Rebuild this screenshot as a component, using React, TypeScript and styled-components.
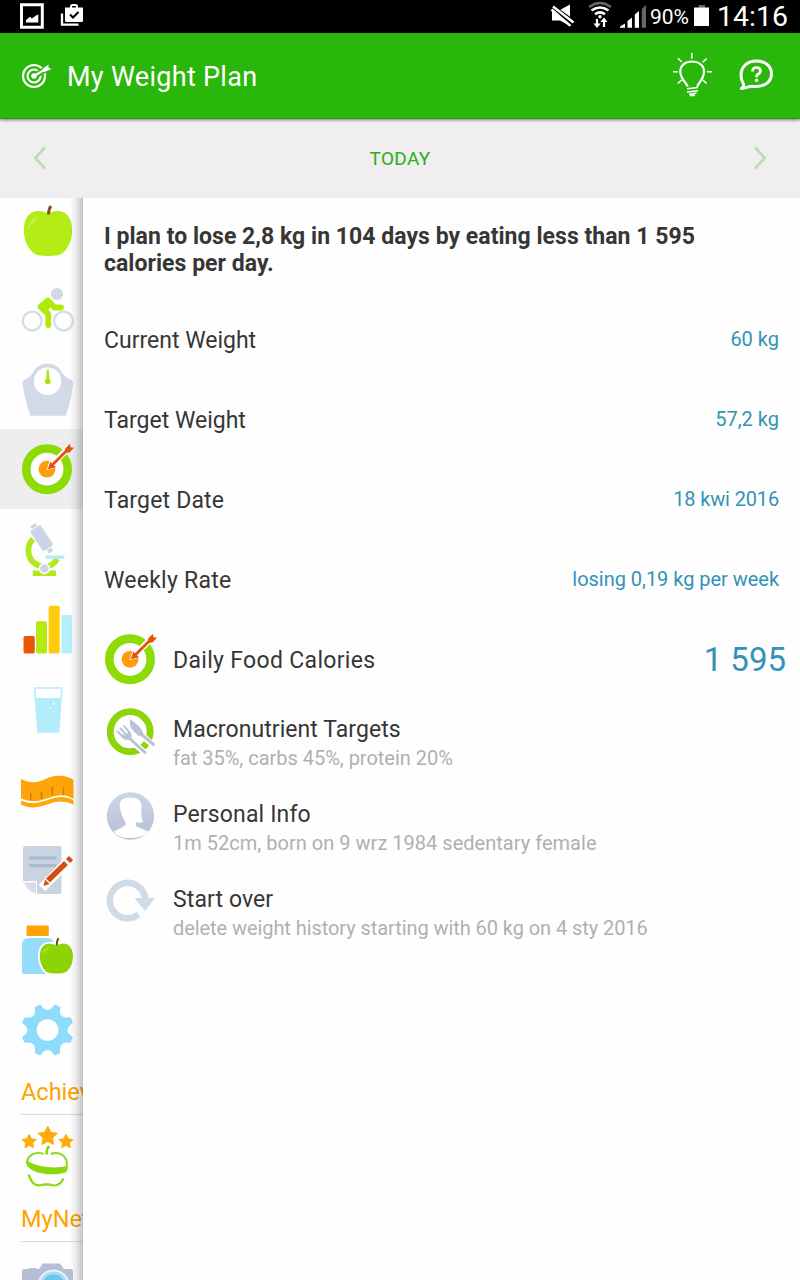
import React from 'react';
import styled, { createGlobalStyle } from 'styled-components';

const GlobalStyle = createGlobalStyle`
  * { box-sizing: border-box; }
  body {
    margin: 0;
    background: #fff;
    font-family: Roboto, "Liberation Sans", sans-serif;
    color: #363636;
  }
`;

const Screen = styled.div`
  width: 800px;
  height: 1280px;
  display: flex;
  flex-direction: column;
  overflow: hidden;
  background: #fefefe;
`;

const StatusBar = styled.div`
  height: 33px;
  flex: none;
  display: flex;
  justify-content: space-between;
  background: #000;
  color: #fff;
`;

const StatusGroup = styled.div`
  display: flex;
  align-items: center;
  height: 33px;
`;

const Battery = styled.span`
  width: 43px;
  font-size: 21px;
  line-height: 33px;
  padding-top: 1px;
  white-space: nowrap;
`;

const Clock = styled.span`
  width: 83px;
  font-size: 28.5px;
  line-height: 31px;
  white-space: nowrap;
`;

const AppBar = styled.header`
  height: 86px;
  flex: none;
  display: flex;
  align-items: center;
  background: #2ab70b;
  border-bottom: 1px solid #2a9a14;
  box-shadow: 0 1px 3px rgba(70, 50, 90, 0.65);
  position: relative;
`;

const Title = styled.h1`
  margin: 0;
  flex: 1;
  padding-top: 3px;
  font-size: 27px;
  font-weight: 400;
  letter-spacing: 0.3px;
  color: #fff;
`;

const DateBar = styled.div`
  height: 79px;
  flex: none;
  display: flex;
  align-items: center;
  justify-content: space-between;
  background: #f0eeee;
  color: #2cae16;
  font-size: 19px;
  letter-spacing: 0.3px;
`;

const Body = styled.div`
  flex: 1;
  min-height: 0;
  display: flex;
`;

const Sidebar = styled.nav`
  width: 83px;
  flex: none;
  overflow: hidden;
  position: relative;
  &::after {
    content: '';
    position: absolute;
    inset: 0 0 0 auto;
    width: 13px;
    background: linear-gradient(to right, rgba(0, 0, 0, 0), rgba(0, 0, 0, 0.07) 45%, rgba(0, 0, 0, 0.24));
  }
`;

const SideList = styled.div`
  margin-top: -9px;
`;

const SideItem = styled.div<{ $active?: boolean; $height?: number }>`
  height: ${(p) => p.$height ?? 80}px;
  background: ${(p) => (p.$active ? '#eeeeee' : 'transparent')};
  svg { display: block; }
`;

const SideHeading = styled.div<{ $height: number }>`
  height: ${(p) => p.$height}px;
  margin-left: 21px;
  border-bottom: 1px solid #dcdcdc;
  color: #ffa200;
  font-size: 23.5px;
  line-height: 47px;
  white-space: nowrap;
`;

const Content = styled.main`
  flex: 1;
  min-width: 0;
  padding: 25px 0 0 21px;
`;

const Summary = styled.p`
  margin: 0;
  height: 78px;
  font-size: 23px;
  font-weight: 700;
  line-height: 27px;
  letter-spacing: 0.035px;
  white-space: nowrap;
`;

const ValueRow = styled.div`
  height: 80px;
  padding-right: 21px;
  display: flex;
  align-items: center;
  justify-content: space-between;
`;

const Label = styled.span<{ $track?: number }>`
  font-size: 23px;
  line-height: 28px;
  letter-spacing: ${(p) => p.$track ?? 0}px;
`;

const Value = styled.span<{ $track?: number }>`
  font-size: 20px;
  line-height: 26px;
  margin-top: -5px;
  letter-spacing: ${(p) => p.$track ?? 0}px;
  color: #3492b8;
`;

const ActionRow = styled.div<{ $height: number; $right?: number }>`
  height: ${(p) => p.$height}px;
  padding-right: ${(p) => p.$right ?? 0}px;
  display: flex;
  align-items: center;
`;

const IconSlot = styled.div`
  width: 69px;
  flex: none;
  svg { display: block; }
`;

const ActionText = styled.div<{ $raise?: number }>`
  flex: 1;
  display: flex;
  flex-direction: column;
  padding-bottom: ${(p) => p.$raise ?? 0}px;
`;

const Hint = styled.span<{ $track?: number }>`
  font-size: 20px;
  line-height: 29px;
  letter-spacing: ${(p) => p.$track ?? 0}px;
  color: #b0b0b0;
`;

const BigValue = styled.span`
  margin-top: -3px;
  font-size: 33px;
  line-height: 40px;
  color: #3492b8;
`;

/* Sidebar drawings share one scroll-space coordinate system; `top` is the slot's offset. */
const SideIcon = ({ top, height = 80, children }: { top: number; height?: number; children: React.ReactNode }) => (
  <svg width="83" height={height} viewBox={`0 ${top} 83 ${height}`} fill="none">{children}</svg>
);

const TargetArt = ({ hole }: { hole: string }) => (
  <>
    <circle cx="25" cy="25.5" r="20.7" stroke="#8ddb05" strokeWidth="8.6" />
    <circle cx="25" cy="25.5" r="8.4" fill="#ff9c0c" />
    <path d="M28 23L47 4" stroke={hole} strokeWidth="6" />
    <path d="M28 16.500L24.500 26.500L35 23.500Z" fill={hole} />
    <path d="M29 22.500L46 5.500" stroke="#e4520c" strokeWidth="2.8" />
    <path d="M25.800 25.500L28.300 18L34 23.500Z" fill="#e4520c" />
    <path d="M43.200 4.800L48 0L48.500 3.500L52 4L47.500 8.800L43 9.200Z" fill="#e4520c" />
  </>
);

const applePath =
  'M48 213.500C52 210.500 60 210 65 213C71 217 72.500 225 72 233C71.500 243 65 255.500 56 255.500C51 256 45 256 40 255.500C31 255 24.500 243 24 233C23.500 225 25 217 31 213C36 210 44 210.500 48 213.500Z';

const starPath = (x: number, y: number, r: number) =>
  'M' +
  Array.from({ length: 10 }, (_, i) => {
    const a = (Math.PI / 5) * i - Math.PI / 2;
    const q = i % 2 ? r * 0.5 : r;
    return `${(x + q * Math.cos(a)).toFixed(2)} ${(y + q * Math.sin(a)).toFixed(2)}`;
  }).join('L') +
  'Z';

const Star = ({ x, y, r }: { x: number; y: number; r: number }) => (
  <path d={starPath(x, y, r)} fill="#ffab0f" stroke="#ffab0f" strokeWidth="1.2" strokeLinejoin="round" />
);

const polar = (cx: number, cy: number, r: number, deg: number) => {
  const a = (deg * Math.PI) / 180;
  return `${(cx + r * Math.cos(a)).toFixed(2)} ${(cy + r * Math.sin(a)).toFixed(2)}`;
};

/* Eight flat-topped teeth with a scooped gap between each pair. */
const gearPath = (cx: number, cy: number) =>
  Array.from({ length: 8 }, (_, i) => {
    const mid = i * 45;
    return `${i ? 'L' : 'M'}${polar(cx, cy, 25.6, mid - 17)}Q${polar(cx, cy, 14, mid)} ${polar(cx, cy, 25.6, mid + 17)}`;
  }).join('') + 'Z';

const StatusLeft = () => (
  <svg width="90" height="33" viewBox="0 0 90 33" fill="none">
    <path d="M21.500 4.700H42.300V27.300H21.500Z" stroke="#fff" strokeWidth="3" />
    <path d="M26 22.500V20L30 16.800L32 18.400L36 15.500L38.300 14.500V22.500Z" fill="#fff" />
    <path d="M62 13.500V24.700H78.500" stroke="#fff" strokeWidth="2.300" />
    <path d="M65 7.500H83V20.500Q83 22 81.500 22H66.500Q65 22 65 20.500Z" fill="#fff" />
    <path d="M71 8V6.500Q71 5 72.500 5H75.500Q77 5 77 6.500V8" stroke="#fff" strokeWidth="2" />
    <path d="M70 14.500L73 17.500L78.500 12" stroke="#000" strokeWidth="2" />
  </svg>
);

const StatusRight = () => (
  <svg width="101" height="33" viewBox="550 0 101 33" fill="none">
    <path d="M553 11H559L571 4.500V26L561 20.500H553Z" fill="#fff" />
    <path d="M552 6.300L575 23.300" stroke="#000" strokeWidth="6" />
    <path d="M552.500 9.500L571.500 25.800M554 6.500L574.500 22.500" stroke="#fff" strokeWidth="2.400" />
    <path d="M590 7Q601 -1 612 7" stroke="#666" strokeWidth="2.500" />
    <path d="M592.500 10.500Q601 4.500 609.500 10.500M596 14.300Q601 10.500 606 14.300" stroke="#fff" strokeWidth="2.600" />
    <circle cx="601" cy="16.800" r="1.700" fill="#fff" />
    <path d="M598 19V25M605 27V20.500" stroke="#fff" strokeWidth="2.200" />
    <path d="M594.500 23.500H601.800L598 28ZM601.300 22H608.500L605 17.500Z" fill="#fff" />
    <path d="M621 27.700V26.500L626 23.500V27.700ZM628.500 27.700V21L633 17.500V27.700ZM635.800 27.700V14.500L640 11V27.700Z" fill="#fff" />
    <path d="M642.800 27.700V9L647 5V27.700Z" fill="#666" />
  </svg>
);

const BatteryIcon = () => (
  <svg width="24" height="33" viewBox="693 0 24 33">
    <path d="M698.500 5H705V8H698.500Z" fill="#666" />
    <path d="M694 7.500H709V26H694Z" fill="#fff" />
  </svg>
);

const AppIcon = () => (
  <svg width="67" height="85" viewBox="0 33 67 85" fill="none">
    <circle cx="34" cy="76" r="11" stroke="#fff" strokeWidth="2.2" />
    <circle cx="34" cy="76" r="6.500" stroke="#fff" strokeWidth="2.2" />
    <circle cx="34" cy="76" r="2.800" fill="#fff" />
    <path d="M37 74.500L51 66" stroke="#2ab70b" strokeWidth="6" />
    <path d="M34 76L45 69.500" stroke="#fff" strokeWidth="2.400" />
    <path d="M42.500 69L48.500 64.500L48.500 67.500L51.500 69L44.500 72Z" fill="#fff" />
  </svg>
);

const AppActions = () => (
  <svg width="140" height="85" viewBox="660 33 140 85" fill="none" stroke="#fff">
    <path d="M687.500 86.800C687.500 83 680.300 80 680.300 71.500C680.300 65 685.500 61.500 692 61.500C698.500 61.500 704 65 704 71.500C704 80 697.500 83 697.300 86.800" strokeWidth="2.2" />
    <path d="M687 88.800L698 87.500M687 92L698 90.700M689 94.300L696.500 93.300M690 95.500H695" strokeWidth="1.500" />
    <path d="M691.800 53V58.500M678 58.300L681.700 62M706.500 58.500L702.800 62.300M673 71.700H678M707 71.700H712M677.800 83.500L681.500 80M706.500 83.500L703 80" strokeWidth="1.600" />
    <path d="M741.500 88.500C744.500 86 744 84.500 742.800 82.500C741.500 80.500 741 78 741 75C741 66.500 747.500 61 756.500 61C765.500 61 771.500 66.500 771.500 74C771.500 81.500 765 86.500 756 86.500C752.500 86.500 751 86 748.500 86.800Q745.500 88 741.500 88.500Z" strokeWidth="3" strokeLinejoin="round" />
    <path d="M752.500 71.500Q752.500 67.500 756.500 67.500T760.500 71Q760.500 73 758.500 74T756.600 77.300" strokeWidth="2.700" />
    <circle cx="756.600" cy="80.200" r="1.700" fill="#fff" stroke="none" />
  </svg>
);

const Chevron = ({ d }: { d: string }) => (
  <svg width="80" height="79" viewBox="0 0 80 79" fill="none">
    <path d={d} stroke="#b9dfb2" strokeWidth="2.800" />
  </svg>
);

const SideIcons = {
  apple: (
    <SideIcon top={189}>
      <path d={applePath} fill="#b5eb16" />
      <path d="M27.500 229Q29 219 38.500 216.500Q35 223 27.500 229Z" fill="#c3f047" />
      <path d="M48.500 214.500Q48.500 209 51 206" stroke="#8a5018" strokeWidth="2.800" />
    </SideIcon>
  ),
  bike: (
    <SideIcon top={269}>
      <circle cx="32.200" cy="321" r="9.400" stroke="#d5dce9" strokeWidth="2.300" />
      <circle cx="63.500" cy="321" r="9.400" stroke="#d5dce9" strokeWidth="2.300" />
      <circle cx="57" cy="294" r="6" fill="#d0d9e8" />
      <path d="M48.300 325V314L40.500 306.800L48 300.500L54.500 307.500H61" stroke="#b0ea08" strokeWidth="5.800" strokeLinecap="round" strokeLinejoin="round" />
      <path d="M41 306L48 300L51 306L47 312Z" fill="#b0ea08" />
    </SideIcon>
  ),
  scale: (
    <SideIcon top={349}>
      <path d="M30.500 415.800C28.500 410 25 399 22.500 384Q22 380.500 25 379.500C29 377.500 31.500 375.500 33 372.500C39 360.500 56 360.500 62 372.500C63.500 375.500 66 377.500 70.500 379.500Q73.500 380.500 73 384C71.500 399 68 410 65.500 415.800Z" fill="#d1dae6" />
      <circle cx="47.500" cy="381.300" r="13.700" fill="#fff" />
      <circle cx="47.800" cy="381.500" r="2.800" fill="#a6e20d" />
      <path d="M46.500 381L47.200 370H48.400L49.200 381Z" fill="#a6e20d" stroke="#a6e20d" strokeWidth=".7" />
    </SideIcon>
  ),
  target: (
    <SideIcon top={429}>
      <circle cx="47" cy="469" r="18" fill="#fff" />
      <g transform="translate(22 443.700)"><TargetArt hole="#fff" /></g>
    </SideIcon>
  ),
  microscope: (
    <SideIcon top={509}>
      <path d="M33 539C25 547 27 564 42.500 566.500C50 567 54.500 564 57 559" stroke="#b0ea1a" strokeWidth="5.800" />
      <path d="M32.800 570.500H56V576H32.800Z" fill="#b0ea1a" />
      <path d="M45.500 555.500H64.500V558.800H45.500Z" fill="#b3ebf7" />
      <g transform="translate(42 538.500) rotate(-34)" fill="#cbd3e4" stroke="#fff" strokeWidth="1">
        <rect x="-3.500" y="-17" width="7" height="6" rx="1" />
        <rect x="-3" y="9" width="6" height="8" rx="1" />
        <rect x="-6.700" y="-13" width="13.400" height="25" rx="2" />
      </g>
      <circle cx="44.500" cy="568.500" r="5" fill="#cbd3e4" stroke="#fff" strokeWidth="1.500" />
    </SideIcon>
  ),
  bars: (
    <SideIcon top={589}>
      <rect x="23.500" y="636" width="11.300" height="17.500" rx="1.800" fill="#ea5707" />
      <rect x="36" y="621.300" width="11" height="32.200" rx="1.800" fill="#b6eb12" />
      <rect x="48.700" y="605.700" width="11" height="47.800" rx="1.800" fill="#ffcb0a" />
      <rect x="61.300" y="615" width="10.700" height="38.500" rx="1.800" fill="#b5effb" />
    </SideIcon>
  ),
  glass: (
    <SideIcon top={669}>
      <path d="M34.500 688H61.800L58.500 732H38Z" stroke="#b4edfa" strokeWidth="1.600" strokeLinejoin="round" />
      <path d="M35.500 698H61L58.500 732H38Z" fill="#b4edfa" />
      <g fill="#dff8fd"><circle cx="53.500" cy="703.500" r="1.500" /><circle cx="50.500" cy="707.500" r="1" /><circle cx="54.500" cy="711.500" r="1" /></g>
    </SideIcon>
  ),
  tape: (
    <SideIcon top={749}>
      <path d="M21 779C39 788 45 775.500 59 775.800Q69 776 73.500 780V799Q66 793.500 55 796C44 799 36 804.500 21 798.500Z" fill="#ffa409" />
      <path d="M21 800.500C35 807 45 800 55 797.800Q66 795.500 73.500 800.800V804.500Q65 800 55 802C44 805 34 811 21 804.500Z" fill="#ffa409" />
      <path d="M30.800 793V800M41.500 792V799M52.300 787V795M63.500 787V795" stroke="#c57c17" strokeWidth="1.500" />
    </SideIcon>
  ),
  note: (
    <SideIcon top={829}>
      <path d="M25 846H59.500Q61.500 846 61.500 848V891.500Q61.500 894 59.500 894H37V881H23V848Q23 846 25 846Z" fill="#c9d3e2" />
      <path d="M24 882.500H36V893.500Q28 892 24 882.500Z" fill="#d5dde9" />
      <path d="M29 858H56.500M29 865.700H56.500" stroke="#a9bdcd" strokeWidth="3.300" />
      <path d="M42 888L72 857" stroke="#fff" strokeWidth="9" />
      <path d="M48 880.500L66 863" stroke="#d44e12" strokeWidth="5.500" />
      <path d="M68 861L71 858" stroke="#d44e12" strokeWidth="5.800" />
      <path d="M43.500 886L45 879.500L49.500 884Z" fill="#d44e12" />
    </SideIcon>
  ),
  bottle: (
    <SideIcon top={909}>
      <rect x="26.500" y="925.500" width="22.300" height="10.500" rx="1.500" fill="#ffa404" />
      <path d="M22 972V945Q22 938 29 938H47Q54 938 54 945V974H24Q22 974 22 972Z" fill="#95dcfa" />
      <g transform="translate(21.500 794) scale(.726 .705)">
        <path d={applePath} fill="#8dd406" stroke="#fff" strokeWidth="2.500" />
        <path d="M28 228Q30 218 39 216.500Q35 223 28 228Z" fill="#a2dd30" />
        <path d="M48.500 215Q48.500 208 51 204.500" stroke="#75400f" strokeWidth="2.700" />
      </g>
    </SideIcon>
  ),
  gear: (
    <SideIcon top={989}>
      <path d={gearPath(47.500, 1030)} fill="#8fdbfb" stroke="#8fdbfb" strokeWidth="1.500" strokeLinejoin="round" />
      <circle cx="47.500" cy="1030" r="10.800" fill="#fefefe" />
    </SideIcon>
  ),
  stars: (
    <SideIcon top={1115} height={81}>
      <Star x={29.200} y={1141.700} r={7} />
      <Star x={47.800} y={1136.300} r={9.700} />
      <Star x={66} y={1141.700} r={7} />
      <path d="M46.500 1154.500Q46.500 1149 49 1146" stroke="#8bd80d" strokeWidth="2.600" />
      <path d="M43.500 1154C35 1150.500 27 1156 27 1163M66.500 1168C69 1157 60 1150.500 51 1154" stroke="#8bd80d" strokeWidth="1.900" />
      <path d="M26.500 1160C33 1166 52 1169.500 67.500 1166Q68.500 1170 65.500 1172.500C51 1177 28 1173 26 1163Z" fill="#8bd80d" />
      <path d="M28.500 1174.500C32 1183 34 1186 40 1185.300Q47 1183.500 53 1185.300C58 1186.500 62 1182 63.500 1178.500" stroke="#8bd80d" strokeWidth="2.200" />
    </SideIcon>
  ),
  camera: (
    <SideIcon top={1242}>
      <path d="M22 1300V1272Q22 1269 25 1269H28L29.500 1268H36L37.500 1269H39L42.500 1263.500H60L64 1269H70Q73 1269 73 1272V1300Z" fill="#b5bed5" />
      <circle cx="53.500" cy="1285.500" r="15" fill="#a9dcf1" stroke="#eaf6fc" strokeWidth="2" />
      <circle cx="53.500" cy="1285.500" r="11" fill="#65c8ef" />
    </SideIcon>
  ),
};

const DetailTarget = () => (
  <svg width="56" height="80" viewBox="0 0 56 80" fill="none">
    <g transform="translate(1 11.800)"><TargetArt hole="#fefefe" /></g>
  </svg>
);

const MacroIcon = () => (
  <svg width="56" height="85" viewBox="104 702 56 85" fill="none">
    <circle cx="130.200" cy="731.700" r="20" stroke="#8cd50a" strokeWidth="6.800" />
    <g stroke="#fff" strokeWidth="6" strokeLinecap="round">
      <path d="M126 736L145 753M136 730L153 745" />
    </g>
    <g stroke="#b9c2d7" strokeLinecap="round">
      <path d="M127 736L145 752.500" strokeWidth="3" />
      <path d="M117.500 731.500L124.500 738.500M120.500 728.500L127 735.500M124 726L130 733" strokeWidth="1.900" />
      <path d="M121 734.500Q124 741 130.500 739Q132.500 735 129 731.500L126 736Z" fill="#b9c2d7" strokeWidth="1" />
      <path d="M142 735L153.500 744.500" strokeWidth="3" />
      <path d="M130.500 720Q129 727 135 732L139 735.500L143 734Q142 728 130.500 720Z" fill="#b9c2d7" strokeWidth="1" />
    </g>
  </svg>
);

const PersonIcon = () => (
  <svg width="56" height="85" viewBox="104 787 56 85" fill="none">
    <defs>
      <linearGradient id="person" x1="0" y1="0" x2="0" y2="1">
        <stop offset="0" stopColor="#ccd6e5" /><stop offset="1" stopColor="#b5bed6" />
      </linearGradient>
    </defs>
    <circle cx="130.500" cy="816" r="23.700" fill="url(#person)" />
    <path d="M114 831.500Q121 828 124.500 826Q126.500 824 125 821.500Q121 815 120 808C118.500 800 124 796.500 130.500 798C138 796.500 142.500 802 141.500 809C141 815 141.500 819 143 822Q139.500 823.500 136 822Q134.500 826 138 827L148 831.500C143 840 118 840.500 114 831.500Z" fill="#fff" />
  </svg>
);

const RestartIcon = () => (
  <svg width="56" height="85" viewBox="104 871.500 56 85" fill="none">
    <path d="M138.500 914A17.700 17.700 0 1 1 145.200 899" stroke="#cfdbe7" strokeWidth="6.500" />
    <path d="M134.500 897.500H155L145 910.500Z" fill="#cfdbe7" />
  </svg>
);

const values = [
  { label: 'Current Weight', value: '60 kg' },
  { label: 'Target Weight', value: '57,2 kg' },
  { label: 'Target Date', value: '18 kwi 2016', track: 0.18, valueTrack: -0.15 },
  { label: 'Weekly Rate', value: 'losing 0,19 kg per week', track: 0.25, valueTrack: -0.03 },
];

const actions = [
  { icon: <MacroIcon />, title: 'Macronutrient Targets', hint: 'fat 35%, carbs 45%, protein 20%', track: 0.07, hintTrack: -0.02 },
  { icon: <PersonIcon />, title: 'Personal Info', hint: '1m 52cm, born on 9 wrz 1984 sedentary female', track: 0.15, hintTrack: 0.02 },
  { icon: <RestartIcon />, title: 'Start over', hint: 'delete weight history starting with 60 kg on 4 sty 2016', track: 0.1, hintTrack: -0.07 },
];

export default function App() {
  return (
    <>
      <GlobalStyle />
      <Screen>
        <StatusBar>
          <StatusGroup><StatusLeft /></StatusGroup>
          <StatusGroup>
            <StatusRight />
            <Battery>90%</Battery>
            <BatteryIcon />
            <Clock>14:16</Clock>
          </StatusGroup>
        </StatusBar>
        <AppBar>
          <AppIcon />
          <Title>My Weight Plan</Title>
          <AppActions />
        </AppBar>
        <DateBar>
          <Chevron d="M45 28.500L35.300 39L45 49.500" />
          <span>TODAY</span>
          <Chevron d="M35 28.500L44.700 39L35 49.500" />
        </DateBar>
        <Body>
          <Sidebar>
            <SideList>
              <SideItem>{SideIcons.apple}</SideItem>
              <SideItem>{SideIcons.bike}</SideItem>
              <SideItem>{SideIcons.scale}</SideItem>
              <SideItem $active>{SideIcons.target}</SideItem>
              <SideItem>{SideIcons.microscope}</SideItem>
              <SideItem>{SideIcons.bars}</SideItem>
              <SideItem>{SideIcons.glass}</SideItem>
              <SideItem>{SideIcons.tape}</SideItem>
              <SideItem>{SideIcons.note}</SideItem>
              <SideItem>{SideIcons.bottle}</SideItem>
              <SideItem>{SideIcons.gear}</SideItem>
              <SideHeading $height={46}>Achievements</SideHeading>
              <SideItem $height={81}>{SideIcons.stars}</SideItem>
              <SideHeading $height={46}>MyNetDiary</SideHeading>
              <SideItem>{SideIcons.camera}</SideItem>
            </SideList>
          </Sidebar>
          <Content>
            <Summary>
              I plan to lose 2,8 kg in 104 days by eating less than 1 595
              <br />
              calories per day.
            </Summary>
            {values.map((v) => (
              <ValueRow key={v.label}>
                <Label $track={v.track}>{v.label}</Label>
                <Value $track={v.valueTrack}>{v.value}</Value>
              </ValueRow>
            ))}
            <ActionRow $height={81} $right={14}>
              <IconSlot><DetailTarget /></IconSlot>
              <ActionText $raise={2}><Label $track={0.32}>Daily Food Calories</Label></ActionText>
              <BigValue>1 595</BigValue>
            </ActionRow>
            {actions.map((a) => (
              <ActionRow key={a.title} $height={85}>
                <IconSlot>{a.icon}</IconSlot>
                <ActionText>
                  <Label $track={a.track}>{a.title}</Label>
                  <Hint $track={a.hintTrack}>{a.hint}</Hint>
                </ActionText>
              </ActionRow>
            ))}
          </Content>
        </Body>
      </Screen>
    </>
  );
}
